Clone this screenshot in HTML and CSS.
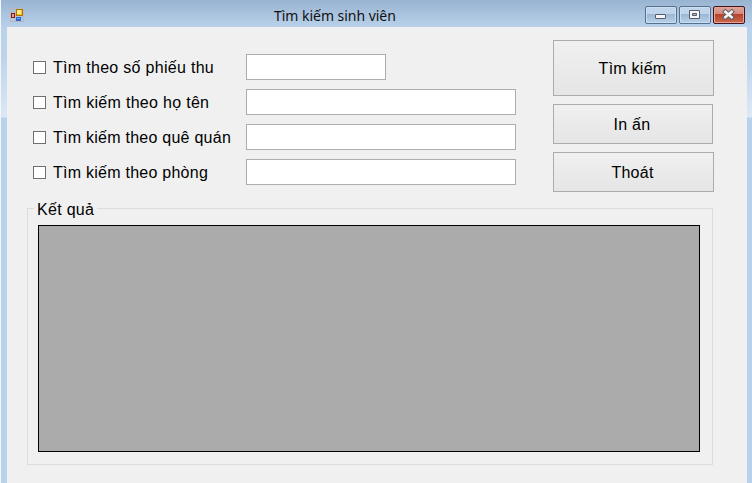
FILE: index.html
```
<!DOCTYPE html>
<html lang="vi">
<head>
<meta charset="utf-8">
<title>Tìm kiếm sinh viên</title>
<link rel="stylesheet" href="styles.css">
</head>
<body>
<div class="window">
  <header class="titlebar">
    <svg class="app-icon" width="14" height="14" viewBox="0 0 14 14" shape-rendering="crispEdges">
      <path fill="none" stroke="#b5bac0" d="M.5 .5h13v13H.5zM5.500 0v14M0 4.500h5M0 9.500h14"/>
      <path fill="#a97400" d="M6 1h7v7H6z"/><path fill="#f4bd24" d="M7 2h5v5H7z"/><path fill="#ffe98a" d="M7 2h4v4H7z"/>
      <path fill="#8f1710" d="M1 5h4v5H1z"/><path fill="#e59a8d" d="M2 6h2v3H2z"/>
      <path fill="#2e66d0" d="M6 9h5v4H6z"/><path fill="#75a5f2" d="M7 10h3v1H7z"/>
    </svg>
    <h1 class="title">Tìm kiếm sinh viên</h1>
    <div class="controls">
      <button class="control" aria-label="Minimize">
        <svg width="32" height="18" viewBox="0 0 32 18"><rect x="10.500" y="8.500" width="10" height="4" rx=".5" fill="#f5f5f5" stroke="#555b6b"/></svg>
      </button>
      <button class="control" aria-label="Maximize">
        <svg width="32" height="18" viewBox="0 0 32 18"><path fill="#f5f5f5" stroke="#555b6b" fill-rule="evenodd" d="M10.500 4.500h10v8h-10zM13.500 7.500v2h4v-2z"/></svg>
      </button>
      <button class="control close" aria-label="Close">
        <svg width="32" height="18" viewBox="0 0 32 18" fill="none" stroke-linecap="square"><path stroke="#555b6b" stroke-width="4.400" d="M12.300 5.800l6.400 5.400M18.700 5.800l-6.400 5.400"/><path stroke="#f5f5f5" stroke-width="2.500" d="M12.300 5.800l6.400 5.400M18.700 5.800l-6.400 5.400"/></svg>
      </button>
    </div>
  </header>
  <div class="frame">
    <main class="client">
      <div class="top">
        <div class="criteria">
          <label class="check"><input type="checkbox"><span class="c1">Tìm theo số phiếu thu</span></label><input class="field short" type="text" aria-label="Số phiếu thu">
          <label class="check"><input type="checkbox"><span class="c2">Tìm kiếm theo họ tên</span></label><input class="field" type="text" aria-label="Họ tên">
          <label class="check"><input type="checkbox"><span class="c3">Tìm kiếm theo quê quán</span></label><input class="field" type="text" aria-label="Quê quán">
          <label class="check"><input type="checkbox"><span class="c4">Tìm kiếm theo phòng</span></label><input class="field" type="text" aria-label="Phòng">
        </div>
        <div class="actions">
          <button class="action search">Tìm kiếm</button>
          <button class="action print">In ấn</button>
          <button class="action">Thoát</button>
        </div>
      </div>
      <section class="results">
        <h2 class="legend">Kết quả</h2>
        <div class="grid"></div>
      </section>
    </main>
  </div>
</div>
</body>
</html>
```
FILE: styles.css
```
* { box-sizing: border-box; }
body {
  margin: 0;
  overflow: hidden;
  background: #f4f6f8;
  font: 16px/20px "Liberation Sans", Arial, sans-serif;
  color: #000;
}
button { font: inherit; color: inherit; padding: 0; }
.window {
  height: 483px;
  margin-left: 1px;
  display: flex;
  flex-direction: column;
}
.titlebar {
  height: 27px;
  display: flex;
  align-items: flex-start;
  background: linear-gradient(#99b4d1, #b9d1ea);
}
.app-icon { margin: 8px 0 0 9px; }
.title {
  flex: 1;
  margin: 6px 0 0 250px;
  font: 14px/20px "Noto Sans", "Open Sans", sans-serif;
  letter-spacing: -.03px;
  color: #111;
  white-space: nowrap;
}
.controls { display: flex; gap: 2px; margin: 6px 7px 0 0; }
.control {
  width: 32px;
  height: 18px;
  border: 1px solid #56708f;
  border-radius: 2px;
  background: linear-gradient(#c0d5eb 0 45%, #9bb6d3 45%, #b9d2ea);
  box-shadow: inset 0 0 0 1px #cbdef0;
}
.control svg { display: block; margin: -1px; }
.close {
  border-color: #43121f;
  background: linear-gradient(#dfa498, #d2877a 45%, #b6412a 45%, #cb6a4c);
  box-shadow: inset 0 0 0 1px #e2a597;
}
.frame {
  flex: 1;
  padding: 0 5px 0 6px;
  background: linear-gradient(#b9d1ea 0, #bdd4ec 30px, #dce8f5 90px, #b9d1ea 91px);
}
.client { height: 100%; padding: 13px 34px 0 20px; background: #f0f0f0; }
.top { display: flex; justify-content: space-between; height: 168px; margin-right: -1px; }
.criteria {
  display: grid;
  grid-template-columns: 213px 270px;
  grid-auto-rows: 26px;
  row-gap: 9px;
  padding: 14px 0 0 6px;
}
.check { display: flex; align-items: center; gap: 7px; white-space: nowrap; }
.check input {
  appearance: none;
  width: 13px;
  height: 13px;
  margin: 1px 0 0;
  border: 1px solid #707070;
  background: #fff;
}
.check span { padding-top: 1px; }
.c1, .c2 { letter-spacing: .3px; }
.c3, .c4 { letter-spacing: .25px; }
.field {
  width: 270px;
  height: 26px;
  border: 1px solid #abadb3;
  background: #fff;
}
.short { width: 140px; }
.actions { width: 161px; display: flex; flex-direction: column; gap: 8px; }
.action {
  height: 40px;
  padding: 2px 2px 0 0;
  border: 1px solid #acacac;
  background: linear-gradient(#f0f0f0, #e5e5e5);
  letter-spacing: .25px;
}
.search { height: 56px; }
.print { width: 160px; }
.results {
  height: 257px;
  padding: 0 12px 0 10px;
  border: 1px solid #dcdcdc;
}
.legend {
  width: 63px;
  height: 20px;
  margin: -9px 0 5px -4px;
  padding-left: 3px;
  font: inherit;
  letter-spacing: .3px;
  background: #f0f0f0;
  white-space: nowrap;
}
.grid { height: 227px; border: 1px solid #000; background: #ababab; }
```
